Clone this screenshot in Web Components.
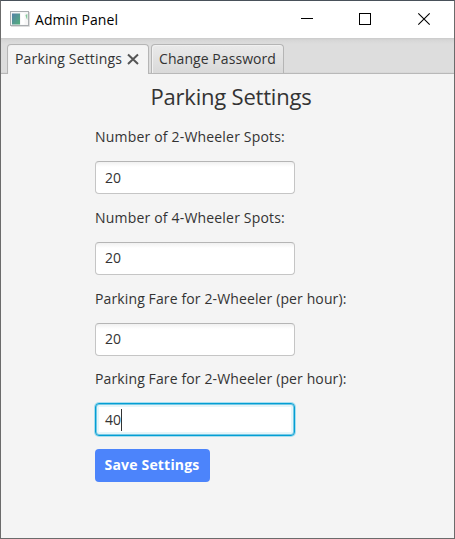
<!DOCTYPE html>
<html lang="en">
<head>
<meta charset="utf-8">
<title>Admin Panel</title>
<style>
html,body{margin:0;height:100%;overflow:hidden}
body{font-family:"Open Sans","Noto Sans",sans-serif;font-size:14px;color:#333}
</style>
</head>
<body>
<app-window>
  <title-bar slot="title"><fit-text width="83">Admin Panel</fit-text></title-bar>
  <tab-strip slot="tabs">
    <tab-item selected><fit-text width="107">Parking Settings</fit-text></tab-item>
    <tab-item><fit-text width="117">Change Password</fit-text></tab-item>
  </tab-strip>
  <settings-form>
    <fit-text slot="heading" width="161">Parking Settings</fit-text>
    <form-field value="20"><fit-text width="190">Number of 2-Wheeler Spots:</fit-text></form-field>
    <form-field value="20"><fit-text width="190">Number of 4-Wheeler Spots:</fit-text></form-field>
    <form-field value="20"><fit-text width="251.5">Parking Fare for 2-Wheeler (per hour):</fit-text></form-field>
    <form-field value="40" active><fit-text width="251.5">Parking Fare for 2-Wheeler (per hour):</fit-text></form-field>
    <save-button><fit-text width="95">Save Settings</fit-text></save-button>
  </settings-form>
</app-window>
<script>
const define = (name, html, setup) => {
  const template = document.createElement('template');
  template.innerHTML = html;
  customElements.define(name, class extends HTMLElement {
    constructor() {
      super();
      this.attachShadow({mode: 'open'}).append(template.content.cloneNode(true));
    }
    connectedCallback() { if (setup) setup(this, this.shadowRoot); }
  });
};

define('app-window', `<style>
:host{display:flex;flex-direction:column;box-sizing:border-box;width:455px;height:539px;border:1px solid #6b6b6b;border-top-color:#49515a;background:#f4f4f4}
</style><slot name="title"></slot><slot name="tabs"></slot><slot></slot>`);

define('title-bar', `<style>
:host{display:flex;align-items:center;height:37px;background:#fff;color:#000}
.name{flex:1;padding-left:5px;line-height:20px}
.app{margin-left:9px;margin-top:-1px}
.controls{display:block}
</style>
<svg class="app" width="20" height="16" viewBox="0 0 20 16">
<defs><linearGradient id="g" x1="0" y1="0" x2="1" y2="1"><stop offset="0" stop-color="#5481a8"/><stop offset="1" stop-color="#54b07b"/></linearGradient></defs>
<rect x=".5" y=".5" width="18" height="14" fill="#f6f6f6" stroke="#a9adb0"/><path d="M1 15.5h18.5V1" fill="none" stroke="#ddd"/>
<rect x="2" y="2.5" width="8" height="11" fill="url(#g)"/><rect x="11" y="2" width="3.5" height="11.5" fill="#fff"/><path d="M15.5 4l1.8-1v6l-1-2z" fill="#82c899"/></svg>
<div class="name"><slot></slot></div>
<svg class="controls" width="153" height="37" viewBox="301 1 153 37" fill="none" stroke="#000">
<path d="M301 18.5h12M359.5 13.5h11v11h-11z" shape-rendering="crispEdges"/><path d="M418.3 13.3l11.4 11.4M429.7 13.3l-11.4 11.4" stroke-width="1.1"/></svg>`);

define('tab-strip', `<style>
:host{display:flex;align-items:flex-end;gap:2px;box-sizing:border-box;height:36px;padding-left:6px;border-bottom:1px solid #b8b8b8;background:linear-gradient(#cacaca,#d6d6d6 2px,#dddddd 6px,#dddddd 34px,#d2d2d2)}
</style><slot></slot>`);

define('tab-item', `<style>
:host{display:flex;align-items:center;box-sizing:border-box;height:29px;width:133px;padding:0 7px;border:1px solid #b5b5b5;border-bottom:0;border-radius:4px 4px 0 0;background:linear-gradient(#eaeaea,#d9d9d9);box-shadow:inset 1px 1px #f1f1f1;line-height:20px}
:host([selected]){width:142px;height:30px;margin-bottom:-1px;padding-bottom:1px;background:#f4f4f4}
svg{display:none;margin-left:5px}
:host([selected]) svg{display:block}
</style><slot></slot><svg width="12" height="12" viewBox="0 0 12 12" stroke="#555" stroke-width="2" fill="none"><path d="M1 1.5l10 9.5M11 1.5L1 11"/></svg>`);

define('settings-form', `<style>
:host{display:flex;flex-direction:column;align-items:flex-start;padding:0 94px}
.heading{align-self:center;width:160px;margin:8px 0 11px 6px;font-size:22px;line-height:28px;height:28px;white-space:nowrap}
</style><div class="heading"><slot name="heading"></slot></div><slot></slot>`);

define('form-field', `<style>
:host{display:block;height:80.75px}
.label{height:20px;line-height:20px;padding-top:6px;white-space:nowrap}
.box{display:flex;align-items:center;box-sizing:border-box;width:200px;height:33px;margin-top:14px;padding-left:9px;border:1px solid #c5c5c5;border-top-color:#b5b5b5;border-radius:4px;background:linear-gradient(#f1f1f1,#fff 5px)}
.box{line-height:20px}
:host([active]) .box{border-color:#039ed3;background:#fff;box-shadow:0 0 0 1px #a8deef,inset 0 0 0 1px #039ed380,inset 0 0 0 3px #e6f5f9}
i{display:none;width:1px;height:22px;background:#333}
:host([active]) i{display:block}
</style><div class="label"><slot></slot></div><div class="box"><fit-text class="value" width="16"></fit-text><i></i></div>`,
(host, root) => { root.querySelector('.value').textContent = host.getAttribute('value'); });

define('save-button', `<style>
:host{display:flex;align-items:center;box-sizing:border-box;width:115px;height:33px;padding-left:9.5px;margin-top:5px;border-radius:4px;background:#4c84fb;color:#fff;font-weight:700;line-height:20px}
slot{display:block;margin-top:-2px}
</style><slot></slot>`);

/* Adjusts tracking so that its text fills the requested width. */
define('fit-text', `<style>:host{display:inline-block;white-space:pre}span{display:inline-block}</style><span><slot></slot></span>`,
(host, root) => {
  const span = root.querySelector('span');
  const fit = () => {
    const n = host.textContent.length;
    if (!n) return;
    span.style.letterSpacing = '0px';
    const natural = span.getBoundingClientRect().width;
    span.style.letterSpacing = (Number(host.getAttribute('width')) - natural) / n + 'px';
  };
  fit();
  root.querySelector('slot').addEventListener('slotchange', fit);
});
</script>
</body>
</html>
